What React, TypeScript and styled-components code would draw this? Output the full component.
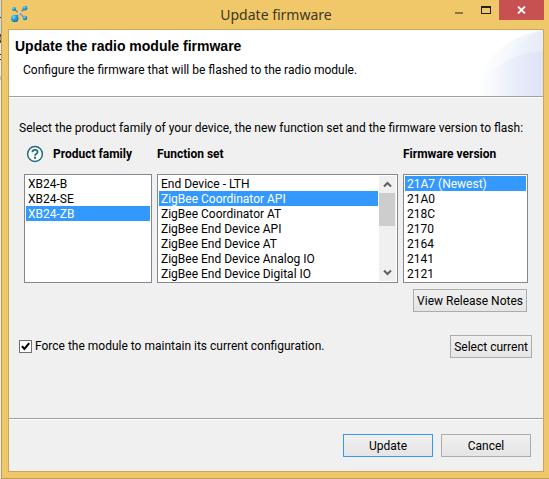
import React, { useState } from "react";
import styled, { createGlobalStyle, css } from "styled-components";

const GlobalStyle = createGlobalStyle`
  *, *::before, *::after { box-sizing: border-box; }
  body {
    margin: 0;
    background: linear-gradient(
      #c3dcf0 0 17px, #27303c 17px 18px, #c3dcf0 18px 34px, #4b3f86 34px 37px,
      #c98a4a 37px 40px, #35507c 40px 43px, #e4eef6 43px 54px, #27303c 54px 55px,
      #e4eef6 55px 59px, #27303c 59px 60px, #e4eef6 60px 76px, #a3cbe6 76px 80px, #e4eef6 80px);
    color: #000;
    font: 12px/15px Roboto, "Noto Sans", sans-serif;
  }
  button, input, select { font: inherit; color: inherit; margin: 0; }
`;

const Frame = styled.div`
  display: flex;
  flex-direction: column;
  min-height: 100vh;
  margin-left: 1px;
  padding: 0 5px 6px 6px;
  background: #f0c869;
  border: solid #bd9d52;
  border-width: 0 0 1px 1px;
`;

const TitleBar = styled.header`
  display: grid;
  grid-template-columns: 1fr auto 1fr;
  height: 29px;
`;

const AppIcon = styled.svg`
  display: block;
  margin: 5px 0 0 3px;
`;

const Title = styled.h1`
  margin: 0;
  font: 14px/29px "Noto Sans", "Open Sans", sans-serif;
  color: #3f3722;
`;

const Controls = styled.div`
  display: flex;
  justify-content: flex-end;
`;

const ControlButton = styled.button<{ $close?: boolean }>`
  display: flex;
  align-items: center;
  justify-content: center;
  width: ${(p) => (p.$close ? 45 : 27)}px;
  height: 20px;
  padding: 0;
  border: 0;
  background: ${(p) => (p.$close ? "#c75050" : "transparent")};
`;

const Dialog = styled.main`
  flex: 1;
  display: flex;
  flex-direction: column;
  border: 1px solid #c9a75a;
  background: #f0f0f0;
`;

const etched = css`
  border-bottom: 1px solid #a0a0a0;
  box-shadow: 0 1px 0 #fff;
`;

const Banner = styled.section`
  display: flex;
  justify-content: space-between;
  height: 67px;
  background: #fff;
  ${etched}
`;

const BannerText = styled.div`
  padding: 8px 0 0 6px;
`;

const BannerTitle = styled.h2`
  margin: 0;
  font: bold 14px/16px "Liberation Sans", Arial, sans-serif;
`;

const BannerNote = styled.p`
  margin: 9px 0 0 8px;
`;

const Swoosh = styled.svg`
  display: block;
  flex: none;
`;

const Body = styled.section`
  flex: 1;
  padding: 24px 10px 0;
  ${etched}
`;

const Intro = styled.p`
  margin: 0;
  white-space: nowrap;
`;

const Lists = styled.div`
  display: grid;
  grid-template-columns: 128fr 241fr 125fr;
  gap: 5px;
  margin: 9px 5px 0;
`;

const Column = styled.div`
  min-width: 0;
`;

const Heading = styled.div`
  display: flex;
  align-items: center;
  height: 18px;
  margin-bottom: 11px;
  font-weight: 700;
  white-space: nowrap;
`;

const HelpButton = styled.button`
  width: 18px;
  height: 18px;
  margin: 0 9px 0 2px;
  padding: 0;
  border: 0;
  background: none;

  svg { display: block; }
`;

const ListFrame = styled.div`
  display: flex;
  height: 109px;
  padding: 1px;
  border: 1px solid #828790;
  background: #fff;
`;

const ListSelect = styled.select`
  flex: 1;
  min-width: 0;
  height: 105px;
  padding: 0;
  border: 0;
  outline: 0;
  border-radius: 0;
  background: #fff;
  overflow-y: auto;
  scrollbar-width: none;

  option {
    height: 15px;
    min-height: 15px;
    padding: 1px 2px 0;
    line-height: 14px;
  }
  option:checked {
    color: #fff;
    background: #3399ff linear-gradient(#3399ff, #3399ff);
  }
`;

const ScrollTrack = styled.div`
  display: flex;
  flex-direction: column;
  width: 17px;
  margin-left: 1px;
  background: #f0f0f0;
`;

const ScrollArrow = styled.button`
  display: flex;
  align-items: center;
  justify-content: center;
  height: 17px;
  padding: 0;
  border: 0;
  background: none;
`;

const ScrollThumb = styled.div`
  height: 33px;
  margin: 0 1px 0 0;
  background: #cdcdcd;
`;

const Spacer = styled.div`
  flex: 1;
`;

const PushButton = styled.button<{ $primary?: boolean; $wide?: boolean }>`
  height: 23px;
  padding: 1px 3px 0;
  ${(p) => p.$wide && "width: 90px;"}
  border: 1px solid ${(p) => (p.$primary ? "#3399ff" : "#acacac")};
  background: linear-gradient(#f0f0f0, #e5e5e5);
  white-space: nowrap;
`;

const NotesRow = styled.div`
  display: flex;
  justify-content: flex-end;
  padding: 6px 6px 0 0;
`;

const ForceRow = styled.div`
  display: flex;
  align-items: center;
  justify-content: space-between;
  margin-top: 23px;
  padding-right: 1px;
`;

const CheckLabel = styled.label`
  display: flex;
  align-items: center;
  gap: 3px;
`;

const CheckBox = styled.input`
  appearance: none;
  width: 13px;
  height: 13px;
  border: 1px solid #707070;
  background: #fff;

  &:checked {
    background: #fff
      url("data:image/svg+xml,%3Csvg xmlns='http://www.w3.org/2000/svg' viewBox='0 0 11 11'%3E%3Cpath d='M2 5.2 4.4 8 9.2 2.2' fill='none' stroke='%23000' stroke-width='2'/%3E%3C/svg%3E")
      center / 11px 11px no-repeat;
  }
`;

const Footer = styled.footer`
  display: flex;
  justify-content: flex-end;
  gap: 8px;
  padding: 15px 12px 14px;
`;

type ListProps = { label: string; items: string[]; initial: string; scrollbar?: boolean };

function ListBox({ label, items, initial, scrollbar }: ListProps) {
  const [value, setValue] = useState(initial);
  return (
    <ListFrame>
      <ListSelect aria-label={label} size={7} value={value} onChange={(e) => setValue(e.target.value)}>
        {items.map((item) => (
          <option key={item}>{item}</option>
        ))}
      </ListSelect>
      {scrollbar && (
        <ScrollTrack>
          <ScrollArrow aria-label="Scroll up">
            <svg width="9" height="7" viewBox="0 0 9 7">
              <path d="M1 5.5 4.5 2 8 5.5" fill="none" stroke="#606060" strokeWidth="2" />
            </svg>
          </ScrollArrow>
          <ScrollThumb />
          <Spacer />
          <ScrollArrow aria-label="Scroll down">
            <svg width="9" height="7" viewBox="0 0 9 7">
              <path d="M1 1.5 4.5 5 8 1.5" fill="none" stroke="#606060" strokeWidth="2" />
            </svg>
          </ScrollArrow>
        </ScrollTrack>
      )}
    </ListFrame>
  );
}

const families = ["XB24-B", "XB24-SE", "XB24-ZB"];
const functionSets = [
  "End Device - LTH",
  "ZigBee Coordinator API",
  "ZigBee Coordinator AT",
  "ZigBee End Device API",
  "ZigBee End Device AT",
  "ZigBee End Device Analog IO",
  "ZigBee End Device Digital IO",
];
const versions = ["21A7 (Newest)", "21A0", "218C", "2170", "2164", "2141", "2121"];

export default function App() {
  const [force, setForce] = useState(true);
  return (
    <>
      <GlobalStyle />
      <Frame>
        <TitleBar>
          <AppIcon width="18" height="18" viewBox="0 0 18 18" aria-hidden="true">
            <defs>
              <radialGradient id="ball" cx="0.35" cy="0.3" r="0.8">
                <stop offset="0" stopColor="#7fd4f5" />
                <stop offset="0.5" stopColor="#1c9cd8" />
                <stop offset="1" stopColor="#0b6fae" />
              </radialGradient>
            </defs>
            <path d="M3 4 14 13M14 3 4 13" stroke="#8f8468" strokeWidth="1.6" />
            <circle cx="9" cy="8.5" r="2.4" fill="#d8d3cc" />
            <circle cx="9.6" cy="9.2" r="1.1" fill="#8f8a86" />
            <circle cx="3" cy="4" r="2" fill="url(#ball)" />
            <circle cx="14" cy="3.2" r="2.4" fill="url(#ball)" />
            <circle cx="14" cy="13" r="2.3" fill="url(#ball)" />
            <circle cx="3.8" cy="13.4" r="3.7" fill="url(#ball)" />
          </AppIcon>
          <Title>Update firmware</Title>
          <Controls>
            <ControlButton aria-label="Minimize">
              <svg width="8" height="20" viewBox="0 0 8 20">
                <path d="M0 12h8v2H0z" fill="#8d7743" />
              </svg>
            </ControlButton>
            <ControlButton aria-label="Maximize">
              <svg width="10" height="20" viewBox="0 0 10 20">
                <path d="M0 6h10v8H0zM1 8v5h8V8z" fill="#222" fillRule="evenodd" />
              </svg>
            </ControlButton>
            <ControlButton aria-label="Close" $close>
              <svg width="9" height="8" viewBox="0 0 9 8">
                <path d="M1 .5 8 7.5M8 .5 1 7.5" stroke="#fff" strokeWidth="1.8" />
              </svg>
            </ControlButton>
          </Controls>
        </TitleBar>
        <Dialog>
          <Banner>
            <BannerText>
              <BannerTitle>Update the radio module firmware</BannerTitle>
              <BannerNote>Configure the firmware that will be flashed to the radio module.</BannerNote>
            </BannerText>
            <Swoosh width="73" height="66" viewBox="0 0 73 66" aria-hidden="true">
              <defs>
                <linearGradient id="outer" gradientUnits="userSpaceOnUse" x1="0" x2="73" y1="0" y2="0">
                  <stop offset="0.05" stopColor="#fff" />
                  <stop offset="0.4" stopColor="#f8fafd" />
                  <stop offset="1" stopColor="#ebf0fa" />
                </linearGradient>
                <linearGradient id="middle" gradientUnits="userSpaceOnUse" x1="25" x2="73" y1="0" y2="0">
                  <stop offset="0" stopColor="#f8fafd" />
                  <stop offset="1" stopColor="#e6ebf9" />
                </linearGradient>
                <linearGradient id="inner" gradientUnits="userSpaceOnUse" x1="0" x2="73" y1="0" y2="0">
                  <stop offset="0.1" stopColor="#fff" />
                  <stop offset="0.3" stopColor="#f8f9fd" />
                  <stop offset="0.6" stopColor="#e9eefa" />
                  <stop offset="1" stopColor="#dce3f6" />
                </linearGradient>
              </defs>
              <path d="M2 66Q18 9 73 0V66Z" fill="url(#outer)" />
              <path d="M25 45Q45 10 73 0V66H25Z" fill="url(#middle)" />
              <path d="M2 66Q24 25 73 21V66Z" fill="url(#inner)" />
            </Swoosh>
          </Banner>
          <Body>
            <Intro>
              Select the product family of your device, the new function set and the firmware version to flash:
            </Intro>
            <Lists>
              <Column>
                <Heading>
                  <HelpButton aria-label="Help">
                    <svg width="18" height="18" viewBox="0 0 18 18">
                      <circle cx="9" cy="9" r="7.4" fill="#fff" stroke="#1f6f80" strokeWidth="1.5" />
                      <path
                        d="M6.4 7.2C6.4 5.6 7.5 4.8 9 4.8s2.6.8 2.6 2.2C11.6 8.7 9 8.7 9 10.7"
                        fill="none"
                        stroke="#1f6f80"
                        strokeWidth="1.8"
                      />
                      <path d="M8 11.8h2v2H8z" fill="#1f6f80" />
                    </svg>
                  </HelpButton>
                  Product family
                </Heading>
                <ListBox label="Product family" items={families} initial="XB24-ZB" />
              </Column>
              <Column>
                <Heading>Function set</Heading>
                <ListBox label="Function set" items={functionSets} initial="ZigBee Coordinator API" scrollbar />
              </Column>
              <Column>
                <Heading>Firmware version</Heading>
                <ListBox label="Firmware version" items={versions} initial="21A7 (Newest)" />
              </Column>
            </Lists>
            <NotesRow>
              <PushButton>View Release Notes</PushButton>
            </NotesRow>
            <ForceRow>
              <CheckLabel>
                <CheckBox type="checkbox" checked={force} onChange={(e) => setForce(e.target.checked)} />
                Force the module to maintain its current configuration.
              </CheckLabel>
              <PushButton>Select current</PushButton>
            </ForceRow>
          </Body>
          <Footer>
            <PushButton $primary $wide>Update</PushButton>
            <PushButton $wide>Cancel</PushButton>
          </Footer>
        </Dialog>
      </Frame>
    </>
  );
}
